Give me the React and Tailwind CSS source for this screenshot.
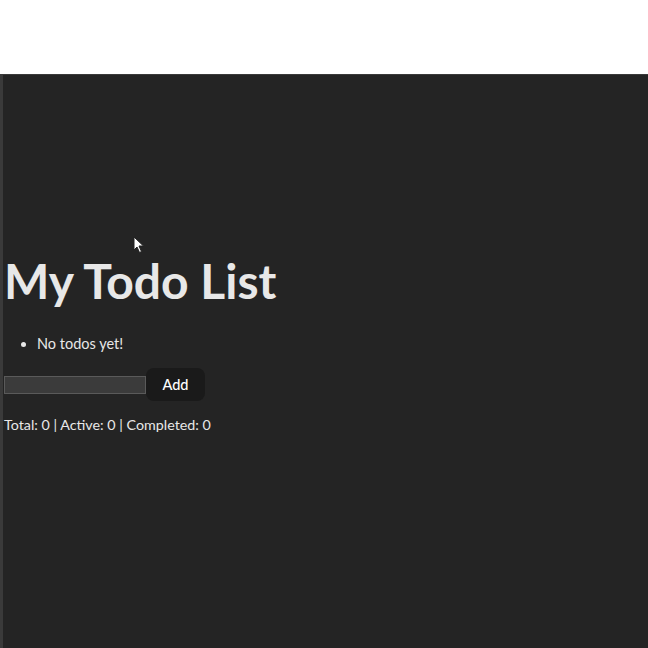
export default function App() {
  return (
    <div className="w-[648px] h-[648px] flex flex-col bg-white overflow-hidden" style={{ fontFamily: 'Lato, "Open Sans", sans-serif' }}>
      <div className="h-[74px] bg-white" />
      <div className="relative flex-1 bg-[#242424] border-l-[3px] border-t border-[#3a3a3a] text-[#e8e8e8]">
        <div className="pt-[178px] pl-[1px] flex flex-col">
          <h1 className="text-[48px] font-bold leading-[56px]">My Todo List</h1>
          <ul className="list-disc pl-[33px] mt-[24px] text-[14.5px] leading-[22px]">
            <li>No todos yet!</li>
          </ul>
          <div className="flex items-center mt-[13px]">
            <input className="w-[142px] h-[18px] bg-[#3b3b3b] border border-[#5a5a5a] outline-none" />
            <button className="h-[33px] w-[59px] rounded-[8px] bg-[#1a1a1a] text-[14.5px] font-medium text-white">Add</button>
          </div>
          <p className="mt-[13px] text-[14.3px] leading-[22px]">Total: 0 | Active: 0 | Completed: 0</p>
        </div>
        <svg className="absolute left-[130px] top-[161px]" width="12" height="18" viewBox="0 0 12 18">
          <path d="M1 1 L1 14 L4 11 L6.5 16.5 L8.5 15.5 L6 10 L10.5 10 Z" fill="white" stroke="#222" strokeWidth="1" />
        </svg>
      </div>
    </div>
  );
}
